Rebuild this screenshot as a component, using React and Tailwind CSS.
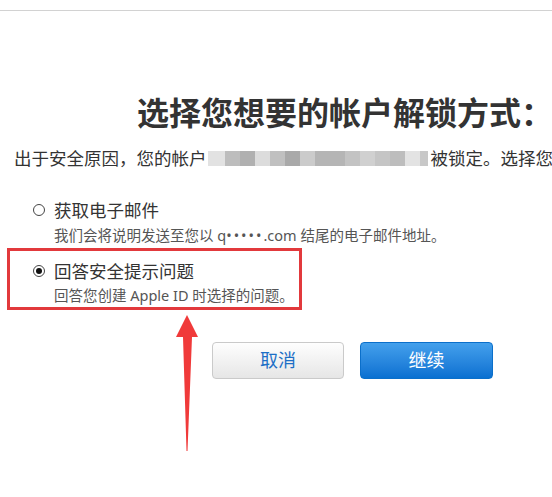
import React from "react";

const font = { fontFamily: '"Noto Sans", "Noto Sans CJK SC", sans-serif' };

const blurBlocks = [
  ["w-[17px]", "bg-[#e2e2e2]"],
  ["w-[15px]", "bg-[#bdbdbd]"],
  ["w-[15px]", "bg-[#b0b0b0]"],
  ["w-[15px]", "bg-[#dcdcdc]"],
  ["w-[15px]", "bg-[#c0c0c0]"],
  ["w-[15px]", "bg-[#a9a9a9]"],
  ["w-[15px]", "bg-[#cbcbcb]"],
  ["w-[30px]", "bg-[#b5b5b5]"],
  ["w-[15px]", "bg-[#c3c3c3]"],
  ["w-[15px]", "bg-[#d0d0d0]"],
  ["w-[15px]", "bg-[#c5c5c5]"],
  ["w-[15px]", "bg-[#bdbdbd]"],
  ["w-[15px]", "bg-[#e3e3e3]"],
  ["w-[8px]", "bg-[#c8c8c8]"],
];

const Radio = ({ checked }) => (
  <span className="flex h-[12px] w-[12px] shrink-0 items-center justify-center rounded-full border border-[#444] bg-white">
    {checked && <span className="h-[6px] w-[6px] rounded-full bg-[#111]" />}
  </span>
);

const App = () => {
  return (
    <div className="relative h-[497px] w-[552px] overflow-hidden bg-white text-[#333]" style={font}>
      <div className="h-[11px] border-b border-[#d2d2d2]" />

      <h1 className="mt-[82px] whitespace-nowrap pl-[137px] text-[32px] font-bold leading-[40px] text-[#333]">
        选择您想要的帐户解锁方式：
      </h1>

      <p className="mt-[13px] flex items-center whitespace-nowrap pl-[14px] text-[17.5px] leading-[24px]">
        <span>出于安全原因，您的帐户</span>
        <span className="mx-px flex h-[15px] items-stretch">
          {blurBlocks.map(([w, bg], i) => (
            <span key={i} className={`${w} ${bg}`} />
          ))}
        </span>
        <span className="ml-[2px]">被锁定。选择您</span>
      </p>

      <div className="mt-[28px] pl-[33px]">
        <div className="flex items-center gap-[9px] text-[17.5px] leading-[24px]">
          <Radio />
          <span>获取电子邮件</span>
        </div>
        <div className="mt-[3px] whitespace-nowrap pl-[21px] text-[14.5px] leading-[20px] text-[#555]">
          我们会将说明发送至您以 q<span className="tracking-[2px]">•••••</span>.com 结尾的电子邮件地址。
        </div>
      </div>

      <div className="ml-[7px] mt-[3px] w-[295px] border-[3px] border-[#e2393c] pb-[2px] pl-[23px] pt-[8px]">
        <div className="flex items-center gap-[9px] text-[17.5px] leading-[24px]">
          <Radio checked />
          <span>回答安全提示问题</span>
        </div>
        <div className="mt-[2px] whitespace-nowrap pl-[21px] text-[14.5px] leading-[20px] text-[#555]">
          回答您创建 Apple ID 时选择的问题。
        </div>
      </div>

      <div className="mt-[32px] flex gap-[16px] pl-[212px]">
        <button className="h-[37px] w-[132px] rounded-[4px] border border-[#cacaca] bg-gradient-to-b from-[#fefefe] to-[#e6e6e6] text-[18px] text-[#1d6fc6]">
          取消
        </button>
        <button className="h-[37px] w-[133px] rounded-[4px] border border-[#0b6fca] bg-gradient-to-b from-[#43a0ec] to-[#0870d1] text-[18px] text-white">
          继续
        </button>
      </div>

      <svg className="absolute left-[176px] top-[315px]" width="22" height="137" viewBox="0 0 22 137">
        <path d="M11 0 L22 22 L16 22 L11.5 136 L10.5 136 L7 22 L0 22 Z" fill="#f03a3a" />
      </svg>
    </div>
  );
};

export default App;
